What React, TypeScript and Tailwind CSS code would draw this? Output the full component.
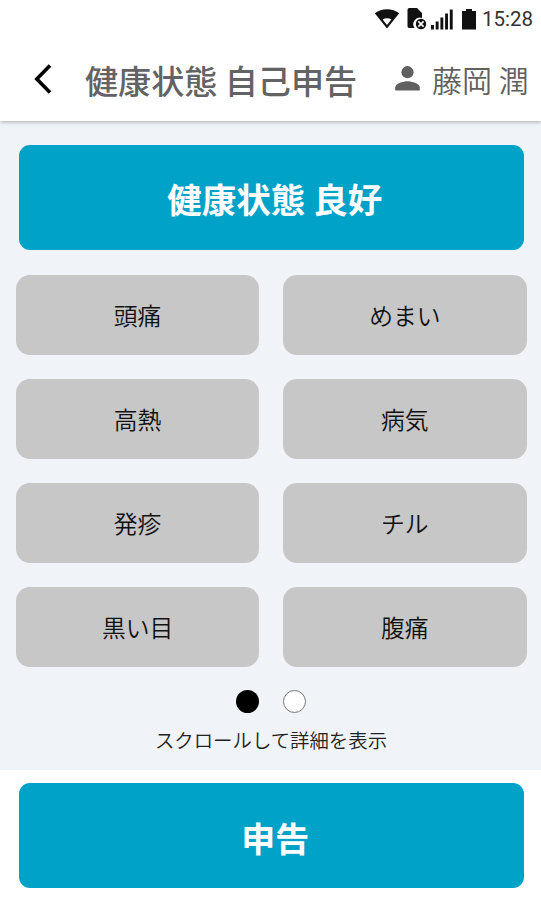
const symptoms = [
  "頭痛",
  "めまい",
  "高熱",
  "病気",
  "発疹",
  "チル",
  "黒い目",
  "腹痛",
];

const StatusBar = () => {
  return (
    <div className="flex h-[38px] items-center justify-end pr-[8px] text-[#111]">
      <svg width="26" height="20" viewBox="0 0 26 20" fill="currentColor">
        <path
          fillRule="evenodd"
          d="M0.8 4.2C7.8 -1.2 18.2 -1.2 25.2 4.2L13 19.6ZM8.6 10.4L13 16L17.4 10.4C14.8 8.8 11.2 8.8 8.6 10.4Z"
        />
      </svg>
      <svg
        className="ml-[7px]"
        width="21"
        height="22"
        viewBox="0 0 21 22"
        fill="currentColor"
      >
        <path d="M2.2 0H10L15 5V10A6.5 6.5 0 0 0 7.6 20H2.2Q0.5 20 0.5 18.3V1.7Q0.5 0 2.2 0Z" />
        <circle cx="14" cy="16" r="5.2" />
        <path
          d="M11.4 13.4L16.6 18.6M16.6 13.4L11.4 18.6"
          stroke="white"
          strokeWidth="1.7"
        />
      </svg>
      <svg
        className="ml-[3px]"
        width="22"
        height="21"
        viewBox="0 0 22 21"
        fill="currentColor"
      >
        <rect x="0" y="16" width="2.9" height="4.5" />
        <rect x="4.7" y="12.5" width="2.9" height="8" />
        <rect x="9.4" y="8.5" width="2.9" height="12" />
        <rect x="14.1" y="4.5" width="2.9" height="16" />
        <rect x="18.8" y="0.5" width="2.9" height="20" />
      </svg>
      <svg
        className="ml-[9px]"
        width="14"
        height="21"
        viewBox="0 0 14 21"
        fill="currentColor"
      >
        <path d="M4 0H10V2H14V20.5H0V2H4Z" />
      </svg>
      <span className="ml-[6px] font-[Roboto,sans-serif] text-[20.5px] leading-none text-[#333]">
        15:28
      </span>
    </div>
  );
};

const Header = () => {
  return (
    <header className="relative z-10 h-[121px] bg-white shadow-[0_1px_4px_rgba(0,0,0,0.3)]">
      <StatusBar />
      <div className="flex h-[83px] items-center pl-[34px]">
        <svg
          className="-mt-[2px]"
          width="18"
          height="30"
          viewBox="0 0 18 30"
          fill="none"
          stroke="black"
          strokeWidth="3.6"
        >
          <path d="M16 1.5L2.8 15L16 28.5" />
        </svg>
        <h1 className="ml-[33px] text-[33.1px] leading-[48px] font-medium whitespace-nowrap text-[#636363]">
          健康状態 自己申告
        </h1>
        <svg
          className="-mt-[2px] ml-[38px]"
          width="25"
          height="25"
          viewBox="0 0 25 25"
          fill="#606060"
        >
          <circle cx="12.5" cy="6.2" r="6.1" />
          <path d="M0.2 24.5V21.4C0.2 17.4 8.2 15.2 12.5 15.2S24.8 17.4 24.8 21.4V24.5Z" />
        </svg>
        <span className="-mt-[2px] ml-[12px] text-[30px] leading-[44px] font-[350] whitespace-nowrap text-[#606060]">
          藤岡 潤
        </span>
      </div>
    </header>
  );
};

export default function App() {
  return (
    <div className="flex h-[900px] w-[541px] flex-col overflow-hidden bg-white font-['Noto_Sans_CJK_JP',sans-serif]">
      <Header />
      <main className="h-[649px] bg-[#f0f4f8] pt-[24px]">
        <button className="ml-[18.5px] block h-[105px] w-[505.5px] rounded-[11px] bg-[#00a2c8] pt-[2px] pl-[7px] text-[34.5px] leading-none font-bold text-white">
          健康状態 良好
        </button>
        <div className="mt-[25px] grid grid-cols-2 gap-x-[24px] gap-y-[24.5px] pr-[14.5px] pl-[16px]">
          {symptoms.map((symptom) => (
            <button
              key={symptom}
              className="h-[79.5px] rounded-[14px] bg-[#c7c7c7] text-[23.8px] leading-none font-[350] text-[#111]"
            >
              {symptom}
            </button>
          ))}
        </div>
        <div className="mt-[23px] flex justify-center gap-[24px] pl-px">
          <span className="size-[23px] rounded-full bg-black" />
          <span className="size-[23px] rounded-full border border-[#777] bg-white" />
        </div>
        <p className="mt-[13px] pl-px text-center text-[19.4px] leading-[28px] font-[350] text-[#222]">
          スクロールして詳細を表示
        </p>
      </main>
      <footer className="pt-[13px]">
        <button className="ml-[18.5px] block h-[105px] w-[505.5px] rounded-[11px] bg-[#00a2c8] pt-[4px] pl-[8px] text-[34px] leading-none font-bold text-white">
          申告
        </button>
      </footer>
    </div>
  );
}
